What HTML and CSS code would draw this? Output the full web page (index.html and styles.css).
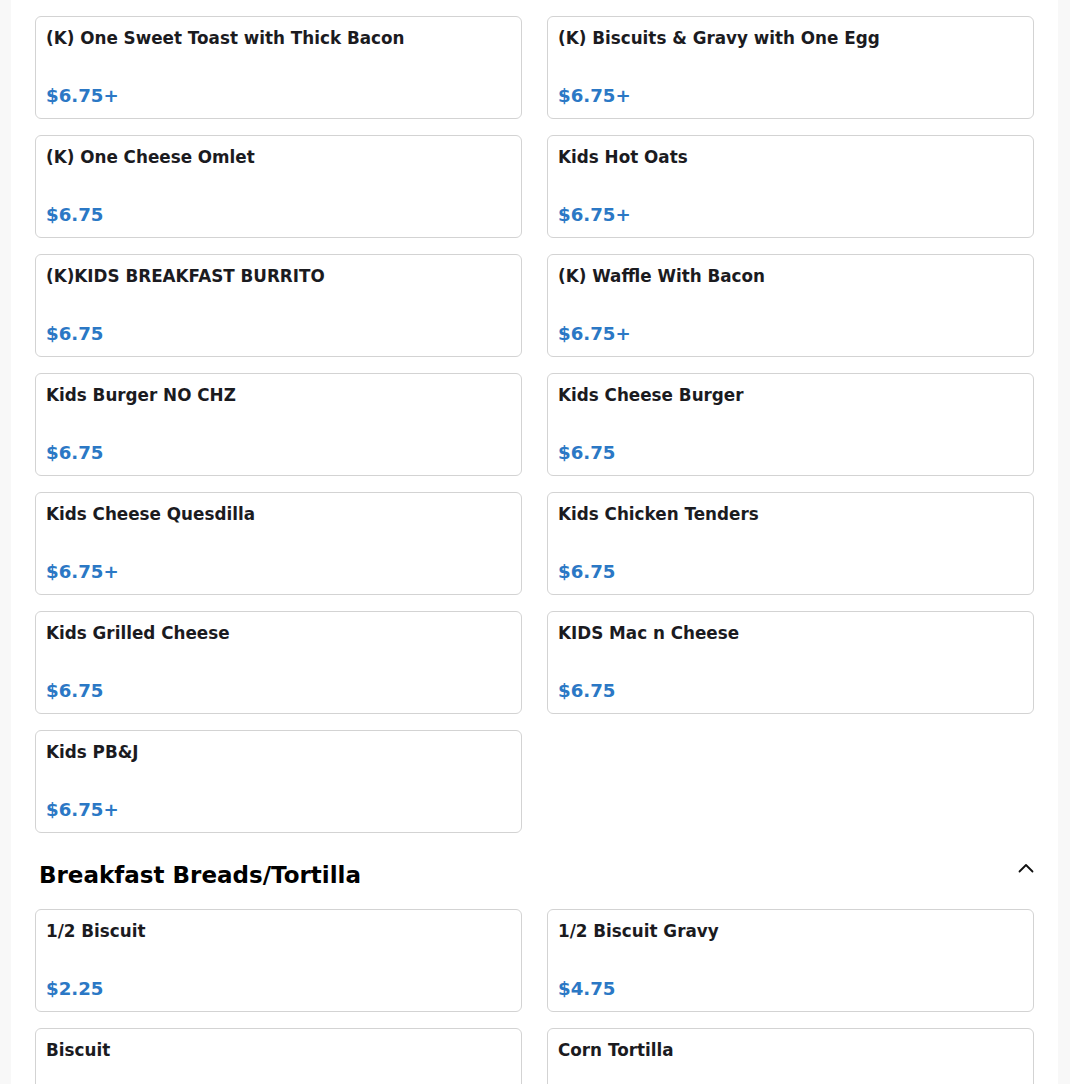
FILE: index.html
```html
<!DOCTYPE html>
<html>
<head>
<meta charset="utf-8">
<link rel="stylesheet" href="styles.css">
</head>
<body>
<div class="panel">
  <div class="grid">
    <div class="card"><div class="title">(K) One Sweet Toast with Thick Bacon</div><div class="price">$6.75+</div></div>
    <div class="card"><div class="title">(K) Biscuits &amp; Gravy with One Egg</div><div class="price">$6.75+</div></div>
    <div class="card"><div class="title">(K) One Cheese Omlet</div><div class="price">$6.75</div></div>
    <div class="card"><div class="title">Kids Hot Oats</div><div class="price">$6.75+</div></div>
    <div class="card"><div class="title">(K)KIDS BREAKFAST BURRITO</div><div class="price">$6.75</div></div>
    <div class="card"><div class="title">(K) Waffle With Bacon</div><div class="price">$6.75+</div></div>
    <div class="card"><div class="title">Kids Burger NO CHZ</div><div class="price">$6.75</div></div>
    <div class="card"><div class="title">Kids Cheese Burger</div><div class="price">$6.75</div></div>
    <div class="card"><div class="title">Kids Cheese Quesdilla</div><div class="price">$6.75+</div></div>
    <div class="card"><div class="title">Kids Chicken Tenders</div><div class="price">$6.75</div></div>
    <div class="card"><div class="title">Kids Grilled Cheese</div><div class="price">$6.75</div></div>
    <div class="card"><div class="title">KIDS Mac n Cheese</div><div class="price">$6.75</div></div>
    <div class="card"><div class="title">Kids PB&amp;J</div><div class="price">$6.75+</div></div>
  </div>
  <div class="section-head">
    <h2 class="section-title">Breakfast Breads/Tortilla</h2>
    <svg class="chevron" width="16" height="16" viewBox="0 0 16 16"><path d="M1.5 11.5 L8 5 L14.5 11.5" fill="none" stroke="#111" stroke-width="1.8" stroke-linecap="round" stroke-linejoin="round"/></svg>
  </div>
  <div class="grid">
    <div class="card"><div class="title">1/2 Biscuit</div><div class="price">$2.25</div></div>
    <div class="card"><div class="title">1/2 Biscuit Gravy</div><div class="price">$4.75</div></div>
    <div class="card"><div class="title">Biscuit</div><div class="price">$2.25</div></div>
    <div class="card"><div class="title">Corn Tortilla</div><div class="price">$1.00</div></div>
  </div>
</div>
</body>
</html>
```
FILE: styles.css
```css
html, body {
  margin: 0;
  padding: 0;
  background: #f8f8f8;
  font-family: "DejaVu Sans", sans-serif;
}
.panel {
  margin: 0 12px 0 11px;
  background: #ffffff;
  padding: 16px 24px 40px 24px;
  min-height: 1100px;
}
.grid {
  display: grid;
  grid-template-columns: 1fr 1fr;
  column-gap: 25px;
  row-gap: 16px;
}
.card {
  box-sizing: border-box;
  height: 103px;
  border: 1px solid #d3d3d3;
  border-radius: 6px;
  padding: 10px 10px 11px 10px;
  display: flex;
  flex-direction: column;
  justify-content: space-between;
}
.title {
  font-size: 16.8px;
  font-weight: bold;
  color: #1b1b1f;
  line-height: 22px;
}
.price {
  font-size: 18.2px;
  font-weight: bold;
  color: #2b78c5;
  line-height: 22px;
}
.section-head {
  display: flex;
  align-items: flex-start;
  justify-content: space-between;
  padding: 28px 0 0 4px;
  height: 48px;
}
.section-title {
  margin: 0;
  font-size: 23px;
  line-height: 28px;
  font-weight: bold;
  color: #000;
}
.chevron {
  margin-top: -1px;
  margin-right: 0;
}
```
